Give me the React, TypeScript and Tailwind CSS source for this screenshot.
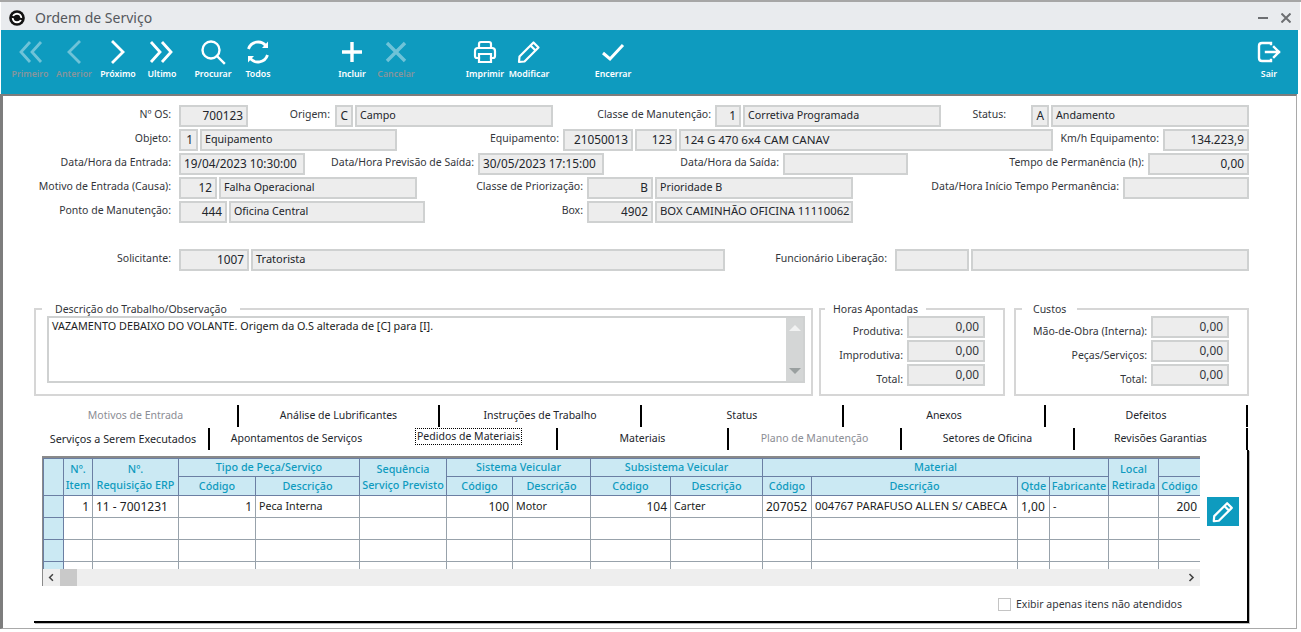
import React from "react";

const font = { fontFamily: '"Noto Sans", "Liberation Sans", sans-serif' };

function L({ c, children }: { c: string; children: React.ReactNode }) {
  return <span className={`flex justify-end whitespace-nowrap text-[#33363b] h-[19px] items-center ${c}`}>{children}</span>;
}
function F({ c, right, children }: { c: string; right?: boolean; children?: React.ReactNode }) {
  return (
    <div className={`h-[22px] shrink-0 border-2 border-[#cfd1d1] bg-[#ededed] flex items-center px-[3px] pb-px whitespace-nowrap overflow-hidden text-[#22252b] ${right ? "justify-end text-[11.8px]" : "text-[10.7px]"} ${c}`}>
      {children}
    </div>
  );
}
function Row({ children, c = "" }: { children: React.ReactNode; c?: string }) {
  return <div className={`flex h-[22px] mb-[2px] ${c}`}>{children}</div>;
}

function Icon({ children, dim }: { children: React.ReactNode; dim?: boolean }) {
  return (
    <svg width="26" height="26" viewBox="0 0 26 26" fill="none" stroke="#fff" strokeWidth="2.8" strokeLinecap="square" className={dim ? "opacity-40" : ""}>
      {children}
    </svg>
  );
}
function Btn({ label, dim, c = "", children }: { label: string; dim?: boolean; c?: string; children: React.ReactNode }) {
  return (
    <div className={`w-[44px] flex flex-col items-center shrink-0 ${c}`}>
      <div className="h-[26px] mt-[9px]">
        <Icon dim={dim}>{children}</Icon>
      </div>
      <span className={`mt-[2px] text-[8.8px] font-semibold whitespace-nowrap leading-[14px] ${dim ? "text-[#87959c]" : "text-white"}`}>{label}</span>
    </div>
  );
}

const th = "border border-[#6b7fa3] bg-[#cbe9f3] text-[#0f9bbf] font-medium text-center whitespace-nowrap overflow-hidden p-0 leading-[14px]";
const thTop = `${th} pb-[2px]`;
const thSub = `${th} pb-px`;
const thSpan = "border border-[#6b7fa3] bg-[#cbe9f3] text-[#0f9bbf] font-medium text-center whitespace-nowrap overflow-hidden p-0 leading-[16px]";
const td = "border border-[#98a2ab] overflow-hidden whitespace-nowrap p-0 px-[3px] text-[#1b1d22] h-[22px]";

const widths = ["w-[20px]", "w-[29px]", "w-[86px]", "w-[77px]", "w-[104px]", "w-[87px]", "w-[66px]", "w-[78px]", "w-[80px]", "w-[92px]", "w-[49px]", "w-[206px]", "w-[32px]", "w-[59px]", "w-[50px]", "w-[42px]"];

const num = "text-right text-[12px]";
const txt = "text-left text-[10.7px]";
const row1: [string, string][] = [
  ["", txt], ["1", num], ["11 - 7001231", "text-left text-[12px]"], ["1", num], ["Peca Interna", txt], ["", txt], ["100", num], ["Motor", txt], ["104", num], ["Carter", txt], ["207052", "text-left text-[12px]"], ["004767 PARAFUSO ALLEN S/ CABECA", "text-left text-[11.2px]"], ["1,00", "text-left text-[12px]"], ["-", txt], ["", txt], ["200", num],
];

function DataRow({ cells }: { cells?: [string, string][] }) {
  return (
    <tr>
      <td className="border border-[#6b7fa3] bg-[#cbe9f3] h-[22px] p-0"></td>
      {widths.slice(1).map((_, i) => {
        const cell = cells ? cells[i + 1] : ["", txt];
        return (
          <td key={i} className={`${td} ${cell[1]}`}>
            {cell[0]}
          </td>
        );
      })}
    </tr>
  );
}

function Sep() {
  return <span className="w-[2px] h-[22px] bg-black shrink-0"></span>;
}
function Tab({ c, dim, children }: { c: string; dim?: boolean; children: React.ReactNode }) {
  return <span className={`flex items-center justify-center whitespace-nowrap shrink-0 ${dim ? "text-[#8b8d94]" : "text-[#23262c]"} ${c}`}>{children}</span>;
}

function Legend({ c, children }: { c: string; children: React.ReactNode }) {
  return <legend className={`text-[#33363b] leading-[16px] ${c}`}>{children}</legend>;
}

function Metric({ label, value, c }: { label: string; value: string; c: string }) {
  return (
    <div className="flex h-[22px] mb-[2px]">
      <span className={`flex justify-end items-end whitespace-nowrap text-[#33363b] mr-[4px] h-[24px] ${c}`}>{label}</span>
      <div className="w-[78px] h-[22px] border-2 border-[#cfd1d1] bg-[#ededed] flex justify-end items-start px-[4px] text-[#33363b] text-[11.8px] leading-[17px]">{value}</div>
    </div>
  );
}

export default function App() {
  return (
    <div style={font} className="w-[1301px] h-[632px] bg-white overflow-hidden text-[10.5px] flex flex-col border-t-2 border-[#a6a6a6]">
      <div className="h-[28px] bg-[#e9ebee] flex items-center mx-px pt-[3px] shrink-0">
        <svg width="16" height="16" viewBox="0 0 16 16" className="ml-[8px] shrink-0">
          <circle cx="8" cy="8" r="7.8" fill="#111" />
          <circle cx="8" cy="8" r="4.2" fill="none" stroke="#fff" strokeWidth="2" />
          <path d="M2.5 6.8 L13.5 9.2" stroke="#111" strokeWidth="2" />
        </svg>
        <span className="ml-[10px] text-[14px] text-[#55585d] leading-none">Ordem de Serviço</span>
        <div className="ml-auto flex items-center mr-[9px]">
          <span className="w-[10px] h-[2px] bg-[#6d6f72]"></span>
          <svg width="10" height="10" viewBox="0 0 10 10" className="ml-[13px]" stroke="#6d6f72" strokeWidth="2">
            <path d="M0.5 0.5 L9.5 9.5 M9.5 0.5 L0.5 9.5" />
          </svg>
        </div>
      </div>

      <div className="h-[64px] bg-[#0e9bbf] flex pl-[7px] shrink-0 mx-px mr-[3px]">
        <Btn label="Primeiro" dim><path d="M13 3 L4 13 L13 23 M24 3 L15 13 L24 23" strokeLinecap="butt" /></Btn>
        <Btn label="Anterior" dim><path d="M18 3 L8 13 L18 23" /></Btn>
        <Btn label="Próximo"><path d="M8 3 L18 13 L8 23" /></Btn>
        <Btn label="Ultimo"><path d="M2 3 L11 13 L2 23 M13 3 L22 13 L13 23" strokeLinecap="butt" /></Btn>
        <Btn label="Procurar" c="ml-[7px]"><circle cx="11" cy="11" r="8.5" strokeWidth="2.4" /><path d="M17 17 L24 24" strokeWidth="2.4" /></Btn>
        <Btn label="Todos" c="ml-px">
          <path d="M3.5 10 A10 10 0 0 1 21 7" strokeLinecap="butt" />
          <path d="M22.5 16 A10 10 0 0 1 5 19" strokeLinecap="butt" />
          <path d="M23 2.5 V9 H17" fill="#fff" stroke="none" />
          <path d="M3 23.5 V17 H9" fill="#fff" stroke="none" />
        </Btn>
        <Btn label="Incluir" c="ml-[50px]"><path d="M13 3 V23 M3 13 H23" strokeWidth="3.4" strokeLinecap="butt" /></Btn>
        <Btn label="Cancelar" dim><path d="M4 4 L22 22 M22 4 L4 22" strokeWidth="3.4" strokeLinecap="butt" /></Btn>
        <Btn label="Imprimir" c="ml-[45px]">
          <path d="M7 9 V5 Q7 3 9 3 H17 Q19 3 19 5 V9" strokeWidth="2.2" />
          <path d="M7 19 H5 Q3 19 3 17 V12 Q3 9 6 9 H20 Q23 9 23 12 V17 Q23 19 21 19 H19" strokeWidth="2.2" />
          <path d="M7 15 H19 V23 H7 Z" strokeWidth="2.2" />
        </Btn>
        <Btn label="Modificar">
          <path d="M17.5 3.5 L22.5 8.5 L8.5 22.5 L3 23 L3.5 17.5 Z M14.5 6.5 L19.5 11.5" strokeWidth="2.2" strokeLinejoin="round" />
        </Btn>
        <Btn label="Encerrar" c="ml-[40px]"><path d="M3 14 L10 20 L23 6" strokeWidth="3" strokeLinecap="butt" /></Btn>
        <Btn label="Sair" c="ml-auto mr-[7px]">
          <path d="M15 5 V4 H6 Q3 4 3 7 V19 Q3 22 6 22 H15 V21" strokeWidth="2.4" />
          <path d="M10 13 H23 M18 8 L23 13 L18 18" strokeWidth="2.4" />
        </Btn>
      </div>

      <div className="flex-1 border-t-2 border-l-[3px] border-t-[#7d7d7d] border-l-[#7d7d7d] border-r border-b border-r-[#a9a9a9] border-b-[#a9a9a9] mr-[4px] mb-[3px] pt-[9px] flex flex-col min-h-0">
        <Row>
          <L c="w-[168px] mr-[8px]">Nº OS:</L><F c="w-[69px]" right>700123</F>
          <L c="w-[82px] mr-[5px]">Origem:</L><F c="w-[18px] mr-[2px]" right>C</F><F c="w-[198px]">Campo</F>
          <L c="w-[158px] mr-[4px]">Classe de Manutenção:</L><F c="w-[26px] mr-[2px]" right>1</F><F c="w-[198px]">Corretiva Programada</F>
          <L c="w-[65px] mr-[25px]">Status:</L><F c="w-[18px] mr-[2px]" right>A</F><F c="w-[198px]">Andamento</F>
        </Row>
        <Row>
          <L c="w-[168px] mr-[8px]">Objeto:</L><F c="w-[19px] mr-[2px]" right>1</F><F c="w-[197px]">Equipamento</F>
          <L c="w-[162px] mr-[4px]">Equipamento:</L><F c="w-[70px] mr-[2px]" right>21050013</F><F c="w-[42px] mr-[2px]" right>123</F><F c="w-[374px]"><span className="text-[11.6px]">124 G 470 6x4 CAM CANAV</span></F>
          <L c="w-[106px] mr-[4px]">Km/h Equipamento:</L><F c="w-[86px]" right>134.223,9</F>
        </Row>
        <Row>
          <L c="w-[168px] mr-[8px]">Data/Hora da Entrada:</L><F c="w-[126px]"><span className="text-[11.8px]">19/04/2023 10:30:00</span></F>
          <L c="w-[169px] mr-[4px]">Data/Hora Previsão de Saída:</L><F c="w-[126px]"><span className="text-[11.8px]">30/05/2023 17:15:00</span></F>
          <L c="w-[175px] mr-[4px]">Data/Hora da Saída:</L><F c="w-[125px]"></F>
          <L c="w-[236px] mr-[4px]">Tempo de Permanência (h):</L><F c="w-[101px]" right>0,00</F>
        </Row>
        <Row>
          <L c="w-[168px] mr-[8px]">Motivo de Entrada (Causa):</L><F c="w-[38px] mr-[2px]" right>12</F><F c="w-[198px]">Falha Operacional</F>
          <L c="w-[166px] mr-[4px]">Classe de Priorização:</L><F c="w-[66px] mr-[2px]" right>B</F><F c="w-[198px]">Prioridade B</F>
          <L c="w-[266px] mr-[4px]">Data/Hora Início Tempo Permanência:</L><F c="w-[126px]"></F>
        </Row>
        <Row>
          <L c="w-[168px] mr-[8px]">Ponto de Manutenção:</L><F c="w-[48px] mr-[2px]" right>444</F><F c="w-[196px]">Oficina Central</F>
          <L c="w-[158px] mr-[4px]">Box:</L><F c="w-[66px] mr-[2px]" right>4902</F><F c="w-[198px]"><span className="text-[11.3px]">BOX CAMINHÃO OFICINA 11110062</span></F>
        </Row>
        <Row c="mt-[24px]">
          <L c="w-[168px] mr-[8px]">Solicitante:</L><F c="w-[70px] mr-[2px]" right>1007</F><F c="w-[474px]"><span className="text-[11px]">Tratorista</span></F>
          <L c="w-[162px] mr-[8px]">Funcionário Liberação:</L><F c="w-[74px] mr-[2px]"></F><F c="w-[278px]"></F>
        </Row>

        <div className="flex ml-[31px] mt-[28px] shrink-0">
          <fieldset className="w-[779px] h-[95px] border-2 border-[#d6d6d6] pl-[11px] pr-[6px]">
            <Legend c="-ml-[5px] px-[13px]">Descrição do Trabalho/Observação</Legend>
            <div className="h-[67px] -mt-px border-2 border-[#cfd1d1] flex">
              <div className="flex-1 pl-[3px] pt-px text-[#1b1d22] text-[10.8px] leading-[14px]">VAZAMENTO DEBAIXO DO VOLANTE. Origem da O.S alterada de [C] para [I].</div>
              <div className="w-[17px] bg-[#d4d6d6] flex flex-col items-center justify-between py-[7px]">
                <span className="w-0 h-0 border-x-[6px] border-x-transparent border-b-[6px] border-b-[#f1f2f2]"></span>
                <span className="w-0 h-0 border-x-[6px] border-x-transparent border-t-[6px] border-t-[#9aa0a0]"></span>
              </div>
            </div>
          </fieldset>
          <fieldset className="w-[186px] h-[95px] ml-[6px] border-2 border-[#d6d6d6]">
            <Legend c="ml-[4px] px-[8px]">Horas Apontadas</Legend>
            <div className="-mt-px">
              <Metric c="w-[82px]" label="Produtiva:" value="0,00" />
              <Metric c="w-[82px]" label="Improdutiva:" value="0,00" />
              <Metric c="w-[82px]" label="Total:" value="0,00" />
            </div>
          </fieldset>
          <fieldset className="w-[235px] h-[95px] ml-[9px] border-2 border-[#d6d6d6]">
            <Legend c="ml-[6px] px-[11px]">Custos</Legend>
            <div className="-mt-px">
              <Metric c="w-[131px]" label="Mão-de-Obra (Interna):" value="0,00" />
              <Metric c="w-[131px]" label="Peças/Serviços:" value="0,00" />
              <Metric c="w-[131px]" label="Total:" value="0,00" />
            </div>
          </fieldset>
        </div>

        <div className="ml-[31px] w-[1215px] mt-[9px] shrink-0">
          <div className="flex h-[22px] mb-px">
            <Tab c="w-[203px]" dim>Motivos de Entrada</Tab><Sep />
            <Tab c="w-[199px]">Análise de Lubrificantes</Tab><Sep />
            <Tab c="w-[200px]">Instruções de Trabalho</Tab><Sep />
            <Tab c="w-[200px]">Status</Tab><Sep />
            <Tab c="w-[200px]">Anexos</Tab><Sep />
            <Tab c="w-[200px]">Defeitos</Tab><Sep />
          </div>
          <div className="flex h-[22px]">
            <Tab c="w-[174px] pl-[4px] text-[10.8px]">Serviços a Serem Executados</Tab><Sep />
            <Tab c="w-[173px]">Apontamentos de Serviços</Tab>
            <Tab c="w-[173px] justify-start">
              <span className="border border-dotted border-black px-px -mt-[5px] leading-[15px] ml-[32px]">Pedidos de Materiais</span>
            </Tab>
            <Sep />
            <Tab c="w-[169px]">Materiais</Tab><Sep />
            <Tab c="w-[171px]" dim>Plano de Manutenção</Tab><Sep />
            <Tab c="w-[171px]">Setores de Oficina</Tab><Sep />
            <Tab c="w-[171px]">Revisões Garantias</Tab><Sep />
          </div>
          <div className="h-[173px] border-r-2 border-b-2 border-black shadow-[1px_1px_0_#bbb] pl-[8px] pt-[6px] flex">
            <div className="w-[1158px] shrink-0">
              <div className="h-[113px] overflow-hidden border-t-2 border-l border-[#8a8a8a]">
                <table className="table-fixed border-collapse w-[1157px] text-[10.8px]">
                  <colgroup>
                    {widths.map((w, i) => <col key={i} className={w} />)}
                  </colgroup>
                  <thead>
                    <tr className="h-[18px]">
                      <th rowSpan={2} className={thSpan}></th>
                      <th rowSpan={2} className={thSpan}>Nº.<br />Item</th>
                      <th rowSpan={2} className={thSpan}>Nº.<br />Requisição ERP</th>
                      <th colSpan={2} className={thTop}>Tipo de Peça/Serviço</th>
                      <th rowSpan={2} className={thSpan}>Sequência<br />Serviço Previsto</th>
                      <th colSpan={2} className={thTop}>Sistema Veicular</th>
                      <th colSpan={2} className={thTop}>Subsistema Veicular</th>
                      <th colSpan={4} className={thTop}>Material</th>
                      <th rowSpan={2} className={thSpan}>Local<br />Retirada</th>
                      <th className={thTop}></th>
                    </tr>
                    <tr className="h-[19px]">
                      <th className={thSub}>Código</th>
                      <th className={thSub}>Descrição</th>
                      <th className={thSub}>Código</th>
                      <th className={thSub}>Descrição</th>
                      <th className={thSub}>Código</th>
                      <th className={thSub}>Descrição</th>
                      <th className={thSub}>Código</th>
                      <th className={thSub}>Descrição</th>
                      <th className={thSub}>Qtde</th>
                      <th className={thSub}>Fabricante</th>
                      <th className={thSub}>Código</th>
                    </tr>
                  </thead>
                  <tbody>
                    <DataRow cells={row1} />
                    <DataRow />
                    <DataRow />
                    <DataRow />
                  </tbody>
                </table>
              </div>
              <div className="h-[17px] bg-[#eeeeee] border-l border-[#8a8a8a] flex items-center">
                <svg width="17" height="17" viewBox="0 0 18 17" className="shrink-0" fill="none" stroke="#444" strokeWidth="1.6"><path d="M10.5 5 L7 8.5 L10.5 12" /></svg>
                <span className="w-[17px] h-[17px] bg-[#c9c9c9]"></span>
                <svg width="18" height="17" viewBox="0 0 18 17" className="ml-auto shrink-0" fill="none" stroke="#444" strokeWidth="1.6"><path d="M7.5 5 L11 8.5 L7.5 12" /></svg>
              </div>
              <div className="flex items-center justify-end mt-[11px] pr-[18px]">
                <span className="w-[13px] h-[13px] border border-[#c4c4c4] bg-white mr-[5px]"></span>
                <span className="text-[#33363b] whitespace-nowrap">Exibir apenas itens não atendidos</span>
              </div>
            </div>
            <div className="w-[32px] h-[29px] ml-[7px] mt-[41px] bg-[#0e9bbf] flex items-center justify-center shrink-0">
              <svg width="24" height="24" viewBox="0 0 26 26" fill="none" stroke="#fff" strokeWidth="2.4" strokeLinejoin="round">
                <path d="M17.5 3.5 L22.5 8.5 L8.5 22.5 L3 23 L3.5 17.5 Z M14.5 6.5 L19.5 11.5" />
              </svg>
            </div>
          </div>
        </div>
      </div>
    </div>
  );
}
